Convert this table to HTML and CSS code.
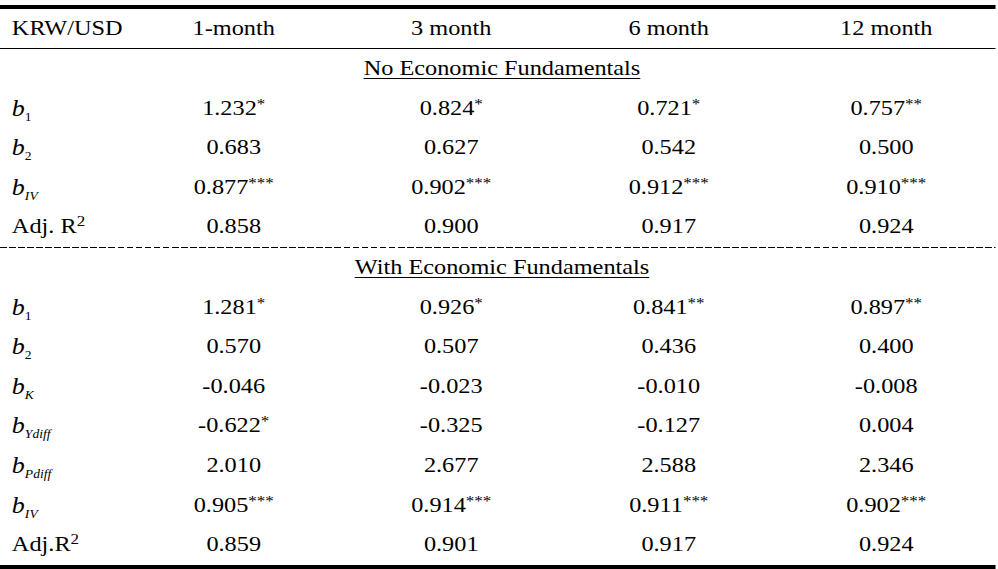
FILE: index.html
```html
<!DOCTYPE html>
<html lang="en">
<head>
<meta charset="utf-8">
<title>KRW/USD regression results</title>
<link rel="stylesheet" href="styles.css">
</head>
<body>
<div class="sheet">
  <div class="results">
    <div class="row head">
      <div class="lab">KRW/USD</div>
      <div class="c">1-month</div>
      <div class="c">3 month</div>
      <div class="c">6 month</div>
      <div class="c">12 month</div>
    </div>

    <div class="row section"><span class="title">No Economic Fundamentals</span></div>
    <div class="row">
      <div class="lab"><i class="b">b</i><sub class="n">1</sub></div>
      <div class="c">1.232<sup class="st">*</sup></div>
      <div class="c">0.824<sup class="st">*</sup></div>
      <div class="c">0.721<sup class="st">*</sup></div>
      <div class="c">0.757<sup class="st">**</sup></div>
    </div>
    <div class="row">
      <div class="lab"><i class="b">b</i><sub class="n">2</sub></div>
      <div class="c">0.683</div>
      <div class="c">0.627</div>
      <div class="c">0.542</div>
      <div class="c">0.500</div>
    </div>
    <div class="row">
      <div class="lab"><i class="b">b</i><sub class="s">IV</sub></div>
      <div class="c">0.877<sup class="st">***</sup></div>
      <div class="c">0.902<sup class="st">***</sup></div>
      <div class="c">0.912<sup class="st">***</sup></div>
      <div class="c">0.910<sup class="st">***</sup></div>
    </div>
    <div class="row">
      <div class="lab">Adj. R<sup class="sq">2</sup></div>
      <div class="c">0.858</div>
      <div class="c">0.900</div>
      <div class="c">0.917</div>
      <div class="c">0.924</div>
    </div>

    <div class="row section dashed"><span class="title">With Economic Fundamentals</span></div>
    <div class="row">
      <div class="lab"><i class="b">b</i><sub class="n">1</sub></div>
      <div class="c">1.281<sup class="st">*</sup></div>
      <div class="c">0.926<sup class="st">*</sup></div>
      <div class="c">0.841<sup class="st">**</sup></div>
      <div class="c">0.897<sup class="st">**</sup></div>
    </div>
    <div class="row">
      <div class="lab"><i class="b">b</i><sub class="n">2</sub></div>
      <div class="c">0.570</div>
      <div class="c">0.507</div>
      <div class="c">0.436</div>
      <div class="c">0.400</div>
    </div>
    <div class="row">
      <div class="lab"><i class="b">b</i><sub class="s">K</sub></div>
      <div class="c">-0.046</div>
      <div class="c">-0.023</div>
      <div class="c">-0.010</div>
      <div class="c">-0.008</div>
    </div>
    <div class="row">
      <div class="lab"><i class="b">b</i><sub class="s">Ydiff</sub></div>
      <div class="c">-0.622<sup class="st">*</sup></div>
      <div class="c">-0.325</div>
      <div class="c">-0.127</div>
      <div class="c">0.004</div>
    </div>
    <div class="row">
      <div class="lab"><i class="b">b</i><sub class="s">Pdiff</sub></div>
      <div class="c">2.010</div>
      <div class="c">2.677</div>
      <div class="c">2.588</div>
      <div class="c">2.346</div>
    </div>
    <div class="row">
      <div class="lab"><i class="b">b</i><sub class="s">IV</sub></div>
      <div class="c">0.905<sup class="st">***</sup></div>
      <div class="c">0.914<sup class="st">***</sup></div>
      <div class="c">0.911<sup class="st">***</sup></div>
      <div class="c">0.902<sup class="st">***</sup></div>
    </div>
    <div class="row">
      <div class="lab">Adj.R<sup class="sq">2</sup></div>
      <div class="c">0.859</div>
      <div class="c">0.901</div>
      <div class="c">0.917</div>
      <div class="c">0.924</div>
    </div>
  </div>
</div>
</body>
</html>
```

FILE: styles.css
```css
html, body {
  margin: 0;
  padding: 0;
  background: #fff;
}

body {
  overflow: hidden;
  color: #000;
  font-family: "Liberation Serif", "Times New Roman", serif;
  font-size: 21.5px;
}

.sheet {
  width: 880.5px;
  padding-top: 5px;
  transform: scaleX(1.13);
  transform-origin: 0 0;
}

.results {
  border-top: 4px solid #000;
  border-bottom: 5px solid #000;
}

.row {
  display: flex;
  align-items: center;
  height: 39.6px;
  line-height: 1;
}

.row.head {
  height: 39px;
  border-bottom: 1px solid #000;
}

.lab {
  flex: 0 0 110.6px;
  box-sizing: border-box;
  padding-left: 10.5px;
  white-space: nowrap;
}

.c {
  flex: 1 1 0;
  text-align: center;
  white-space: nowrap;
}

.section {
  justify-content: center;
  padding-left: 8px;
}

.section.dashed {
  height: 40.6px;
  box-sizing: border-box;
  padding-top: 1px;
  background-image: repeating-linear-gradient(to right, #000 0, #000 6px, transparent 6px, transparent 8px);
  background-size: 100% 1px;
  background-repeat: no-repeat;
  background-position: 0 0;
}

.title {
  text-decoration: underline;
  text-decoration-thickness: 1px;
  text-underline-offset: 3px;
}

.b {
  font-style: italic;
  font-size: 23px;
}

sub, sup {
  line-height: 0;
}

.n {
  font-size: 12px;
  vertical-align: -5px;
}

.s {
  font-style: italic;
  font-size: 12px;
  vertical-align: -5px;
}

.st {
  font-size: 15px;
  vertical-align: 6px;
}

.sq {
  font-size: 15px;
  vertical-align: 7px;
}
```
